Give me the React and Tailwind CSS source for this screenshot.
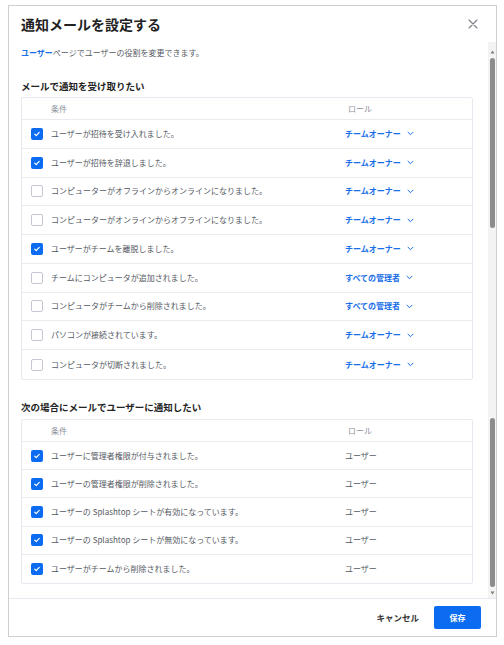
const FONT = { fontFamily: '"Noto Sans CJK JP", "Noto Sans", sans-serif' };

const adminRows = [
  { label: "ユーザーが招待を受け入れました。", role: "チームオーナー", checked: true },
  { label: "ユーザーが招待を辞退しました。", role: "チームオーナー", checked: true },
  { label: "コンピューターがオフラインからオンラインになりました。", role: "チームオーナー", checked: false },
  { label: "コンピューターがオンラインからオフラインになりました。", role: "チームオーナー", checked: false },
  { label: "ユーザーがチームを離脱しました。", role: "チームオーナー", checked: true },
  { label: "チームにコンピュータが追加されました。", role: "すべての管理者", checked: false },
  { label: "コンピュータがチームから削除されました。", role: "すべての管理者", checked: false },
  { label: "パソコンが接続されています。", role: "チームオーナー", checked: false },
  { label: "コンピュータが切断されました。", role: "チームオーナー", checked: false },
];

const userRows = [
  "ユーザーに管理者権限が付与されました。",
  "ユーザーの管理者権限が削除されました。",
  "ユーザーの Splashtop シートが有効になっています。",
  "ユーザーの Splashtop シートが無効になっています。",
  "ユーザーがチームから削除されました。",
];

function Checkbox({ checked }) {
  if (checked) {
    return (
      <span className="flex h-[12px] w-[12px] shrink-0 items-center justify-center rounded-[2px] bg-[#0b6cf2]">
        <svg width="8" height="8" viewBox="0 0 8 8" fill="none">
          <path d="M1.8 4.2 3.3 5.6 6.2 2.4" stroke="white" strokeWidth="1.2" strokeLinecap="round" strokeLinejoin="round" />
        </svg>
      </span>
    );
  }
  return <span className="h-[12px] w-[12px] shrink-0 rounded-[2px] border border-[#c5c8d2] bg-white" />;
}

function Chevron() {
  return (
    <svg width="7" height="5" viewBox="0 0 7 5" fill="none" className="ml-[6px]">
      <path d="M1 1.2 3.5 3.7 6 1.2" stroke="#1a6fe8" strokeWidth="1" strokeLinecap="round" strokeLinejoin="round" />
    </svg>
  );
}

function HeaderRow() {
  return (
    <div className="grid h-[22px] grid-cols-[323px_1fr] items-center border-b border-[#e8ebf0] text-[8px] text-[#8a8f99]">
      <span className="pl-[29px]">条件</span>
      <span className="pl-[3px]">ロール</span>
    </div>
  );
}

function Row({ label, checked, children, last, height }) {
  return (
    <div
      className={`grid grid-cols-[323px_1fr] items-center ${last ? "" : "border-b border-[#e8ebf0]"}`}
      style={{ height }}
    >
      <div className="flex items-center gap-[8px] pl-[9px]">
        <Checkbox checked={checked} />
        <span className="whitespace-nowrap text-[8px] text-[#555a63]">{label}</span>
      </div>
      <div className="flex items-center">{children}</div>
    </div>
  );
}

export default function App() {
  return (
    <div className="min-h-[645px] bg-white pl-[8px] pt-[5px]" style={FONT}>
      <div className="flex h-[632px] w-[489px] flex-col border border-[#cfcfcf] bg-white">
        <div className="flex h-[36px] shrink-0 items-center justify-between pl-[12px] pr-[18px]">
          <h1 className="text-[14px] font-bold text-[#222]">通知メールを設定する</h1>
          <svg width="10" height="10" viewBox="0 0 10 10" fill="none">
            <path d="M1 1 9 9M9 1 1 9" stroke="#7a7f88" strokeWidth="1.1" strokeLinecap="round" />
          </svg>
        </div>

        <div className="flex h-[556px] shrink-0">
          <div className="flex-1 pl-[12px] pr-[15px] pt-[5px]">
            <p className="text-[8px] leading-[12px] text-[#555a63]">
              <span className="font-bold text-[#1a6fe8]">ユーザー</span>ページでユーザーの役割を変更できます。
            </p>

            <h2 className="mt-[20px] text-[9.5px] font-bold leading-[14px] text-[#222]">メールで通知を受け取りたい</h2>
            <div className="mt-[4px] rounded-[2px] border border-[#e6e9ef]">
              <HeaderRow />
              {adminRows.map((row, i) => (
                <Row
                  key={row.label}
                  label={row.label}
                  checked={row.checked}
                  last={i === adminRows.length - 1}
                  height={i === adminRows.length - 1 ? "29px" : "28.75px"}
                >
                  <span className="text-[8px] font-bold text-[#1a6fe8]">{row.role}</span>
                  <Chevron />
                </Row>
              ))}
            </div>

            <h2 className="mt-[20px] text-[9.5px] font-bold leading-[14px] text-[#222]">次の場合にメールでユーザーに通知したい</h2>
            <div className="mt-[5px] rounded-[2px] border border-[#e6e9ef]">
              <HeaderRow />
              {userRows.map((label, i) => (
                <Row key={label} label={label} checked last={i === userRows.length - 1} height="28.2px">
                  <span className="text-[8px] text-[#555a63]">ユーザー</span>
                </Row>
              ))}
            </div>
          </div>

          <div className="flex w-[8px] shrink-0 flex-col items-center bg-[#f3f3f3]">
            <svg width="5" height="4" viewBox="0 0 5 4" className="mt-[8px]">
              <path d="M2.5 0.5 4.5 3.5H0.5Z" fill="#7d7d7d" />
            </svg>
            <div className="mt-[4px] h-[170px] w-[5px] rounded-full bg-[#8c8c8c]" />
            <div className="h-[190px]" />
            <div className="h-[169px] w-[5px] rounded-full bg-[#8c8c8c]" />
            <svg width="5" height="4" viewBox="0 0 5 4" className="mt-[4px]">
              <path d="M0.5 0.5H4.5L2.5 3.5Z" fill="#7d7d7d" />
            </svg>
          </div>
        </div>

        <div className="flex flex-1 items-center justify-end gap-[15px] border-t border-[#e6e9ef] pr-[15px]">
          <button className="text-[8.5px] font-bold text-[#333]">キャンセル</button>
          <button className="h-[23px] w-[47px] rounded-[2px] bg-[#0b6cf2] text-[8px] font-bold text-white">保存</button>
        </div>
      </div>
    </div>
  );
}
